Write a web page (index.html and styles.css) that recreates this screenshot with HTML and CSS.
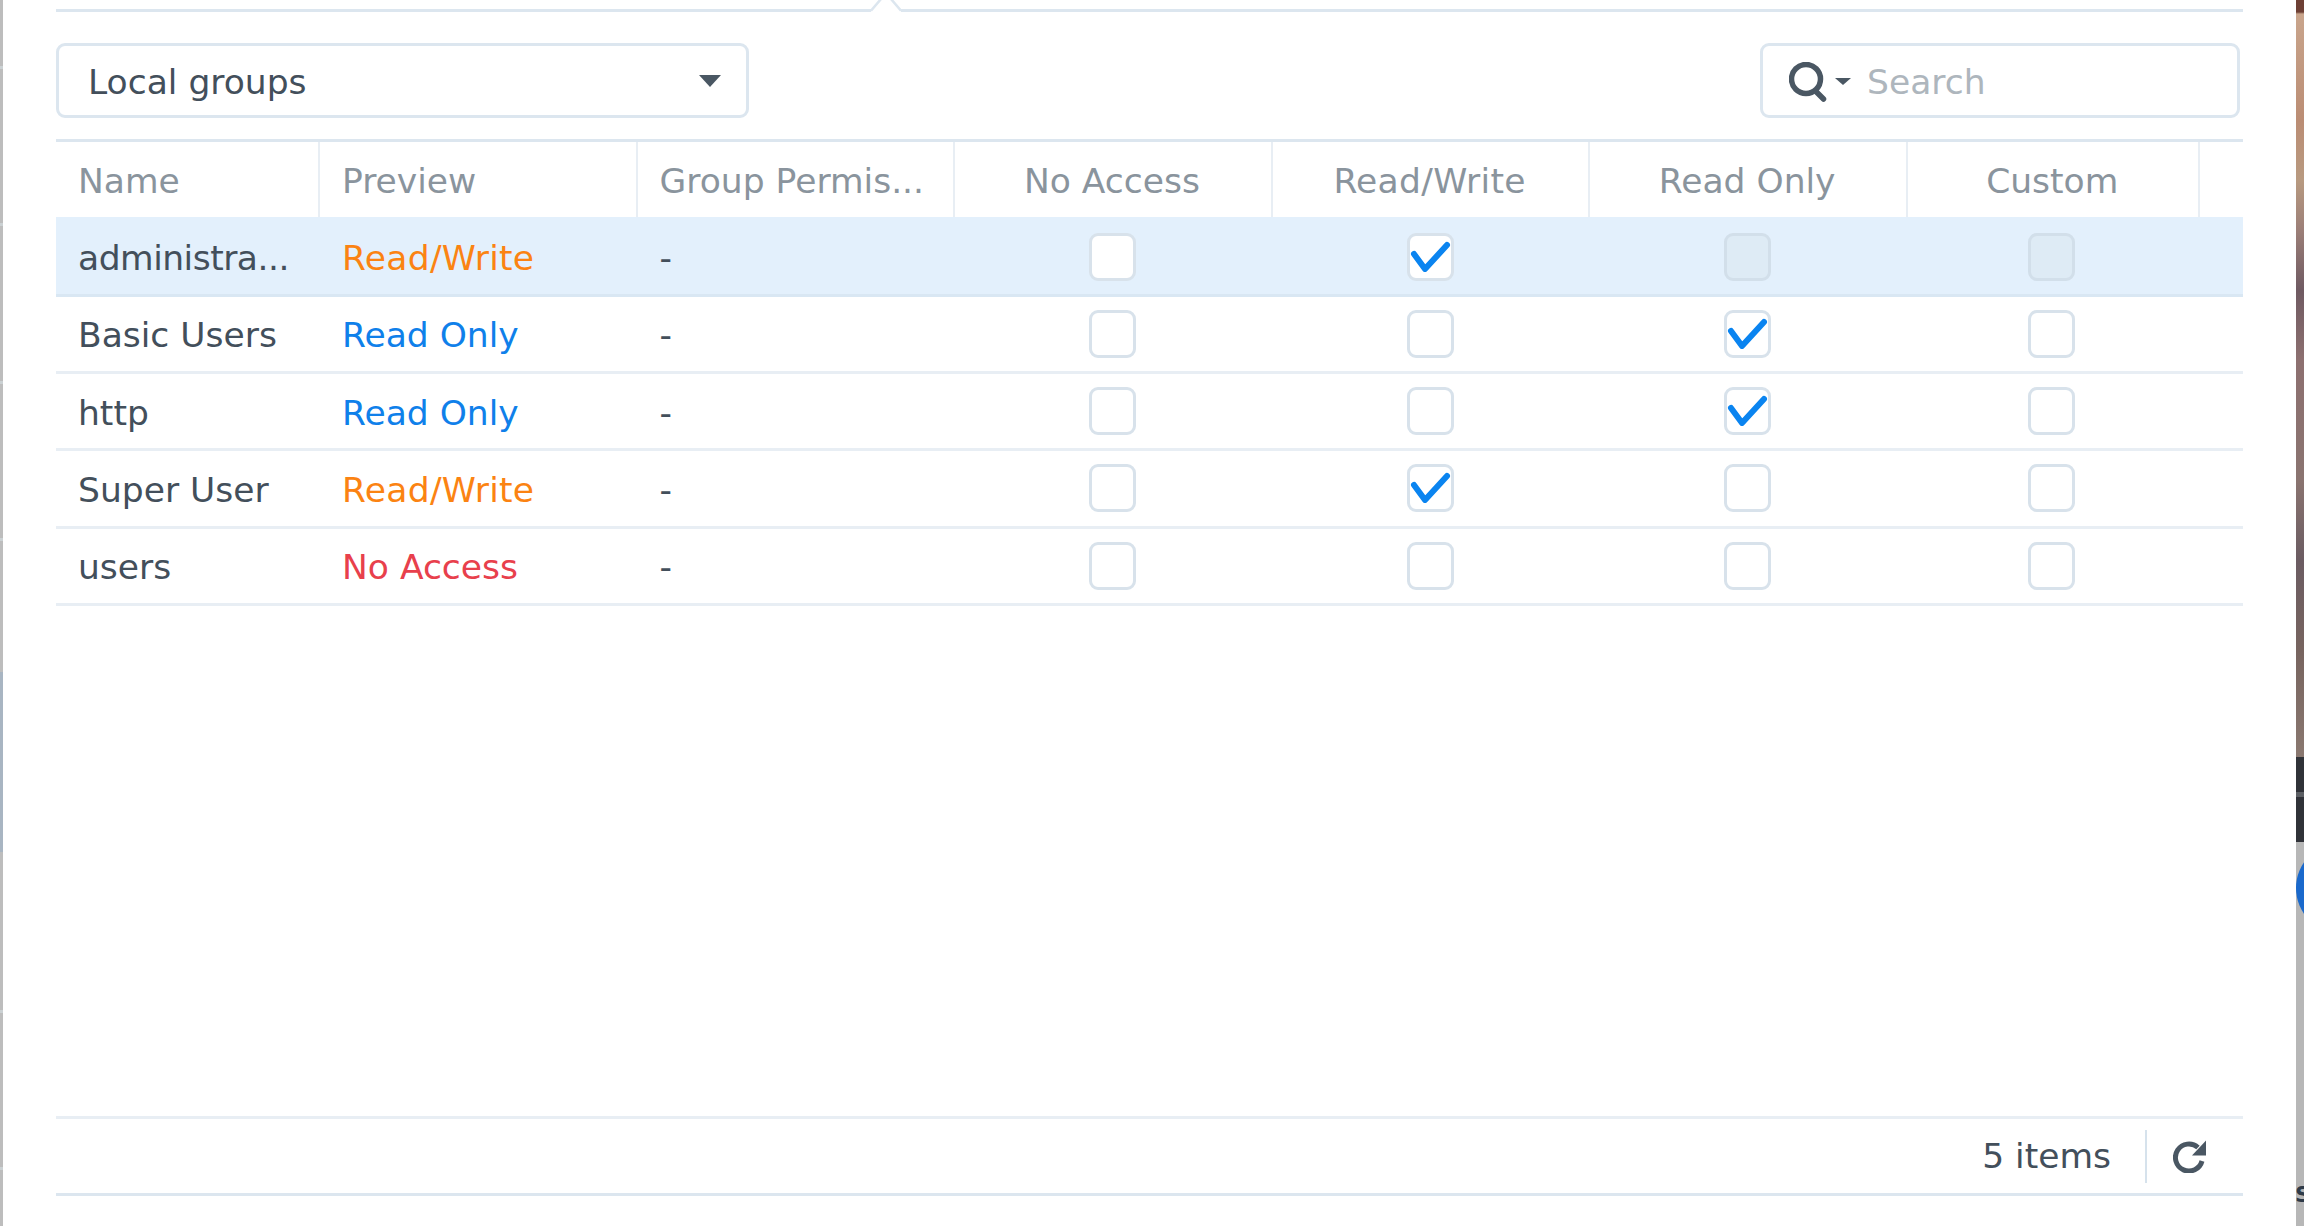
FILE: index.html
```html
<!DOCTYPE HTML>
<html lang="en-US">
<head>
	<meta charset="UTF-8">
	<title>Permissions</title>
	<link rel="stylesheet" href="styles.css">
</head>
<body>
<div class="screen">
	<div class="edge_left"></div>
	<div class="panel">
		<div class="tab_line">
			<div class="tab_seg seg_left"></div>
			<svg class="notch" width="30" height="12" viewBox="0 0 30 12"><path d="M0 10.700L10 -1M20 -1L30 10.700" fill="none" stroke="#dce6ef" stroke-width="2.500"/></svg>
			<div class="tab_seg seg_right"></div>
		</div>
		<div class="toolbar">
			<div class="select_box">
				<span>Local groups</span>
				<i class="caret caret_big"></i>
			</div>
			<div class="search_box">
				<svg class="search_icon" width="38" height="40" viewBox="0 0 38 40">
					<circle cx="17" cy="17" r="14.500" fill="none" stroke="#4a5763" stroke-width="5.500"/>
					<path d="M27.500 30L34.500 37" fill="none" stroke="#4a5763" stroke-width="5.500" stroke-linecap="round"/>
				</svg>
				<i class="caret caret_small"></i>
				<span class="placeholder">Search</span>
			</div>
		</div>
		<div class="grid_head">
			<div class="cell c_name">Name</div>
			<div class="cell c_wide">Preview</div>
			<div class="cell c_wide">Group Permis...</div>
			<div class="cell c_wide center">No Access</div>
			<div class="cell c_wide center rw_head">Read/Write</div>
			<div class="cell c_wide center">Read Only</div>
			<div class="cell c_last center">Custom</div>
			<div class="cell c_fill"></div>
		</div>
		<div class="row selected">
			<div class="cell c_name tight">administra...</div>
			<div class="cell c_wide rw">Read/Write</div>
			<div class="cell c_wide">-</div>
			<div class="cell c_wide center"><span class="check"></span></div>
			<div class="cell c_wide center"><span class="check"><svg width="41" height="36" viewBox="0 0 41 36"><path d="M4 18L15 33L37 9" fill="none" stroke="#0a84f0" stroke-width="6" stroke-linecap="round" stroke-linejoin="round"/></svg></span></div>
			<div class="cell c_wide center"><span class="check off"></span></div>
			<div class="cell c_last center"><span class="check off"></span></div>
			<div class="cell c_fill"></div>
		</div>
		<div class="row">
			<div class="cell c_name">Basic Users</div>
			<div class="cell c_wide ro">Read Only</div>
			<div class="cell c_wide">-</div>
			<div class="cell c_wide center"><span class="check"></span></div>
			<div class="cell c_wide center"><span class="check"></span></div>
			<div class="cell c_wide center"><span class="check"><svg width="41" height="36" viewBox="0 0 41 36"><path d="M4 18L15 33L37 9" fill="none" stroke="#0a84f0" stroke-width="6" stroke-linecap="round" stroke-linejoin="round"/></svg></span></div>
			<div class="cell c_last center"><span class="check"></span></div>
			<div class="cell c_fill"></div>
		</div>
		<div class="row">
			<div class="cell c_name">http</div>
			<div class="cell c_wide ro">Read Only</div>
			<div class="cell c_wide">-</div>
			<div class="cell c_wide center"><span class="check"></span></div>
			<div class="cell c_wide center"><span class="check"></span></div>
			<div class="cell c_wide center"><span class="check"><svg width="41" height="36" viewBox="0 0 41 36"><path d="M4 18L15 33L37 9" fill="none" stroke="#0a84f0" stroke-width="6" stroke-linecap="round" stroke-linejoin="round"/></svg></span></div>
			<div class="cell c_last center"><span class="check"></span></div>
			<div class="cell c_fill"></div>
		</div>
		<div class="row">
			<div class="cell c_name">Super User</div>
			<div class="cell c_wide rw">Read/Write</div>
			<div class="cell c_wide">-</div>
			<div class="cell c_wide center"><span class="check"></span></div>
			<div class="cell c_wide center"><span class="check"><svg width="41" height="36" viewBox="0 0 41 36"><path d="M4 18L15 33L37 9" fill="none" stroke="#0a84f0" stroke-width="6" stroke-linecap="round" stroke-linejoin="round"/></svg></span></div>
			<div class="cell c_wide center"><span class="check"></span></div>
			<div class="cell c_last center"><span class="check"></span></div>
			<div class="cell c_fill"></div>
		</div>
		<div class="row">
			<div class="cell c_name">users</div>
			<div class="cell c_wide na">No Access</div>
			<div class="cell c_wide">-</div>
			<div class="cell c_wide center"><span class="check"></span></div>
			<div class="cell c_wide center"><span class="check"></span></div>
			<div class="cell c_wide center"><span class="check"></span></div>
			<div class="cell c_last center"><span class="check"></span></div>
			<div class="cell c_fill"></div>
		</div>
		<div class="grid_space"></div>
		<div class="pager">
			<span class="count">5 items</span>
			<span class="pager_sep"></span>
			<svg class="refresh" width="34" height="33" viewBox="0 0 34 33">
				<path d="M29 21A13.500 13.500 0 1 1 25 7.500" fill="none" stroke="#4a5763" stroke-width="5"/>
				<path d="M33 0.500V15.500H19Z" fill="#4a5763"/>
			</svg>
		</div>
	</div>
	<div class="edge_right">
		<div class="wall"></div>
		<div class="dock"></div>
		<div class="dock_grey"><span class="blue_dot"></span><span class="frag">S</span></div>
	</div>
</div>
</body>
</html>
```

FILE: styles.css
```css
*{
	padding:0;
	margin:0;
	box-sizing:border-box;
}
html,body{
	height:100%;
	overflow:hidden;
	background:#fff;
}
body{
	font-family:"DejaVu Sans",sans-serif;
	font-size:34.500px;
	color:#434f5b;
}
.screen{
	display:flex;
	height:1226px;
}
/**strip of the window behind, with its list lines**/
.edge_left{
	width:3px;
	background:linear-gradient(#bdbdbd 66px,#cbd1d3 66px,#cbd1d3 69px,#bdbdbd 69px,#bdbdbd 223px,#cbd1d3 223px,#cbd1d3 226px,#bdbdbd 226px,#bdbdbd 381px,#cbd1d3 381px,#cbd1d3 384px,#bdbdbd 384px,#bdbdbd 538px,#cbd1d3 538px,#cbd1d3 541px,#bdbdbd 541px,#bdbdbd 672px,#a8b5c2 672px,#a8b5c2 852px,#bdbdbd 852px,#bdbdbd 1010px,#cbd1d3 1010px,#cbd1d3 1013px,#bdbdbd 1013px,#bdbdbd 1167px,#cbd1d3 1167px,#cbd1d3 1170px,#bdbdbd 1170px);
}
/**white window, children follow top to bottom**/
.panel{
	width:2293px;
	padding:0 53px;
	display:flex;
	flex-direction:column;
}
.tab_line{
	display:flex;
	align-items:flex-end;
	height:12px;
}
.tab_seg{
	height:3px;
	background:#dce6ef;
}
.seg_left{
	width:814.500px;
}
.seg_right{
	flex:1;
}
.notch{
	flex:none;
}
.toolbar{
	display:flex;
	justify-content:space-between;
	margin-top:31px;
	padding-right:3px;
}
.select_box,.search_box{
	height:75px;
	border:3px solid #dce6ef;
	border-radius:9px;
	display:flex;
	align-items:center;
}
.select_box span,.placeholder{
	padding-top:3px;
}
.select_box{
	width:693px;
	padding:0 25px 0 29px;
	justify-content:space-between;
}
.search_box{
	width:480px;
	padding-left:26px;
	color:#aeb6bd;
}
.search_icon{
	flex:none;
	margin-top:3px;
}
.caret{
	display:block;
	border-style:solid;
	border-color:#4a5763 transparent transparent transparent;
}
.caret_big{
	border-width:12px 11px 0 11px;
	margin-top:1px;
}
.caret_small{
	border-width:7px 8px 0 8px;
	margin:2px 0 0 8px;
}
.placeholder{
	margin-left:16px;
}
.grid_head{
	display:flex;
	margin-top:21px;
	height:78px;
	border-top:3px solid #dce6ef;
	color:#8a949d;
}
.row{
	display:flex;
	height:77.300px;
	border-bottom:3px solid #e8eef4;
}
.row.selected{
	height:79.700px;
	padding-top:2.400px;
	background:#e3f0fc;
	border-bottom-color:#d9e7f3;
}
.cell{
	display:flex;
	align-items:center;
	padding-left:22px;
	white-space:nowrap;
}
.row .cell{
	padding-top:3px;
}
.row .center{
	padding-top:0;
}
.grid_head .cell{
	border-right:2px solid #e8eef4;
	padding-top:2px;
}
.grid_head .c_fill{
	border-right:0;
}
.c_name{
	width:264px;
}
.c_wide{
	width:317.600px;
}
.c_last{
	width:292.500px;
}
.c_fill{
	flex:1;
}
.center{
	justify-content:center;
	padding-left:0;
}
.grid_head .center{
	padding-right:2px;
}
.tight{
	letter-spacing:-0.500px;
}
.rw{
	color:#fb8312;
	letter-spacing:0.300px;
}
.rw_head{
	letter-spacing:0.300px;
}
.ro{
	color:#0f80ea;
}
.na{
	color:#e8404c;
}
.check{
	display:block;
	width:47px;
	height:48px;
	border:3px solid #d8e2eb;
	border-radius:9px;
	background:#fff;
	margin-right:3px;
}
.c_last .check{
	margin-right:5px;
}
.check svg{
	display:block;
}
.check.off{
	background:#deebf5;
	border-color:#d2dfea;
}
.grid_space{
	flex:1;
}
.pager{
	height:80px;
	margin-bottom:30px;
	border-top:3px solid #e8eef4;
	border-bottom:3px solid #dce6ef;
	display:flex;
	justify-content:flex-end;
	align-items:center;
}
.count{
	margin-right:34px;
}
.pager_sep{
	width:2px;
	height:53px;
	background:#d6e2ec;
	margin-right:26px;
}
.refresh{
	margin-right:36px;
}
.edge_right{
	width:8px;
	display:flex;
	flex-direction:column;
	overflow:hidden;
}
/**blurred wallpaper showing at the right**/
.wall{
	height:757px;
	background:linear-gradient(#6e4035 12px,#c9a58c 14px,#bb8d74 120px,#b89a80 180px,#9c7f78 230px,#6f5a62 290px,#8d7070 360px,#8a7470 480px,#6b5c62 560px,#77645f 650px,#8a7870 757px);
}
.dock{
	height:85px;
	background:linear-gradient(#303238 35px,#5c5f64 35px,#5c5f64 40px,#303238 40px);
}
.dock_grey{
	flex:1;
	background:#b7b7b7;
	display:flex;
	flex-direction:column;
}
.blue_dot{
	display:block;
	flex:none;
	width:90px;
	height:90px;
	border-radius:50%;
	background:#1a69cc;
	margin-top:1px;
}
.frag{
	margin:251px 0 0 -1px;
	font-weight:bold;
	font-size:22px;
	line-height:1;
	color:#2e3a48;
}
```
